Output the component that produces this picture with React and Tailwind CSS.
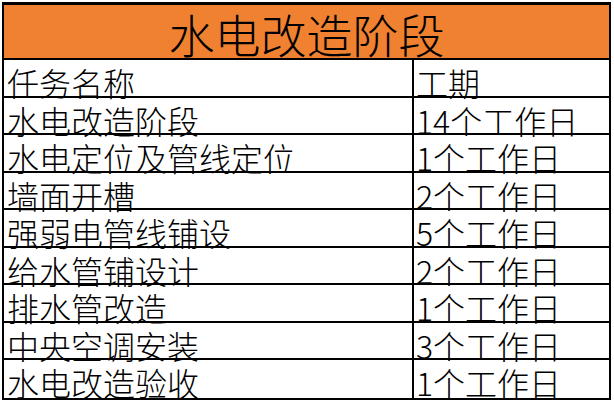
import React from 'react';

const rows = [
  ['任务名称', '工期'],
  ['水电改造阶段', '14个工作日'],
  ['水电定位及管线定位', '1个工作日'],
  ['墙面开槽', '2个工作日'],
  ['强弱电管线铺设', '5个工作日'],
  ['给水管铺设计', '2个工作日'],
  ['排水管改造', '1个工作日'],
  ['中央空调安装', '3个工作日'],
  ['水电改造验收', '1个工作日'],
];

const font = { fontFamily: '"Noto Sans CJK SC", "Noto Sans", sans-serif' };

const App = () => {
  return (
    <div className="w-[614px] h-[408px] bg-white pt-[2px] pl-[2px]" style={font}>
      <div className="w-[609px] border-2 border-t-[3px] border-black">
        <div className="h-[55px] bg-[#ef8130] border-b-2 border-black flex items-center justify-center text-[46px] font-light leading-none text-black pt-[3px]">
          水电改造阶段
        </div>
        {rows.map((row, i) => (
          <div
            key={i}
            className={`grid grid-cols-[410px_1fr] h-[37.5px] ${i < rows.length - 1 ? 'border-b-2 border-black' : ''}`}
          >
            <div className="border-r-2 border-black pl-[3px] pt-[10px] text-[32px] font-light leading-[24px] text-black whitespace-nowrap">
              {row[0]}
            </div>
            <div className="pl-[2px] pt-[10px] text-[32px] font-light leading-[24px] text-black whitespace-nowrap">
              {row[1]}
            </div>
          </div>
        ))}
      </div>
    </div>
  );
};

export default App;
